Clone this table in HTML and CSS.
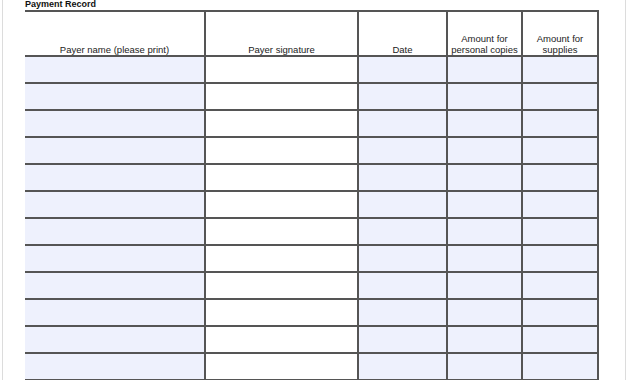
FILE: index.html
```html
<!DOCTYPE html>
<html>
<head>
<meta charset="utf-8">
<link rel="stylesheet" href="styles.css">
</head>
<body>
<div class="page">
  <div class="title">Payment Record</div>
  <div class="table">
    <div class="cell head">Payer name (please print)</div>
    <div class="cell head">Payer signature</div>
    <div class="cell head">Date</div>
    <div class="cell head">Amount for<br>personal copies</div>
    <div class="cell head">Amount for<br>supplies</div>
    <div class="cell fill"></div><div class="cell"></div><div class="cell fill"></div><div class="cell fill"></div><div class="cell fill"></div>
    <div class="cell fill"></div><div class="cell"></div><div class="cell fill"></div><div class="cell fill"></div><div class="cell fill"></div>
    <div class="cell fill"></div><div class="cell"></div><div class="cell fill"></div><div class="cell fill"></div><div class="cell fill"></div>
    <div class="cell fill"></div><div class="cell"></div><div class="cell fill"></div><div class="cell fill"></div><div class="cell fill"></div>
    <div class="cell fill"></div><div class="cell"></div><div class="cell fill"></div><div class="cell fill"></div><div class="cell fill"></div>
    <div class="cell fill"></div><div class="cell"></div><div class="cell fill"></div><div class="cell fill"></div><div class="cell fill"></div>
    <div class="cell fill"></div><div class="cell"></div><div class="cell fill"></div><div class="cell fill"></div><div class="cell fill"></div>
    <div class="cell fill"></div><div class="cell"></div><div class="cell fill"></div><div class="cell fill"></div><div class="cell fill"></div>
    <div class="cell fill"></div><div class="cell"></div><div class="cell fill"></div><div class="cell fill"></div><div class="cell fill"></div>
    <div class="cell fill"></div><div class="cell"></div><div class="cell fill"></div><div class="cell fill"></div><div class="cell fill"></div>
    <div class="cell fill"></div><div class="cell"></div><div class="cell fill"></div><div class="cell fill"></div><div class="cell fill"></div>
    <div class="cell fill"></div><div class="cell"></div><div class="cell fill"></div><div class="cell fill"></div><div class="cell fill"></div>
  </div>
</div>
</body>
</html>
```
FILE: styles.css
```css
html, body {
  margin: 0;
  padding: 0;
  background: #ffffff;
  overflow: hidden;
}
body {
  width: 630px;
  height: 380px;
  font-family: "Liberation Sans", Arial, sans-serif;
  color: #111;
}
.page {
  margin-left: 2px;
  width: 624px;
  height: 380px;
  overflow: hidden;
  border-left: 1px solid #dcdcdc;
  border-right: 1px solid #dcdcdc;
  padding-left: 22px;
  box-sizing: border-box;
}
.title {
  font-size: 9px;
  font-weight: bold;
  line-height: 8px;
  height: 10px;
}
.table {
  display: grid;
  grid-template-columns: 181px 153px 89px 75px 76px;
  grid-template-rows: 45px;
  grid-auto-rows: 27px;
  border-top: 2px solid #555;
  width: 574px;
}
.cell {
  border-right: 2px solid #555;
  border-bottom: 2px solid #555;
  box-sizing: border-box;
  background: #fff;
}
.fill {
  background: #eef1fd;
}
.head {
  display: flex;
  align-items: flex-end;
  justify-content: center;
  text-align: center;
  font-size: 9.5px;
  line-height: 11px;
  padding-bottom: 0;
  color: #222;
}
```
